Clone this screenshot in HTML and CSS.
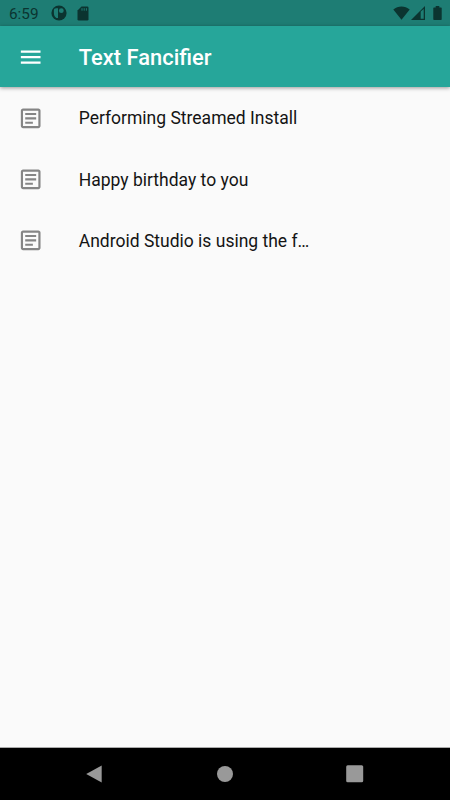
FILE: index.html
```html
<!DOCTYPE html>
<html lang="en">
<head>
<meta charset="utf-8">
<title>Text Fancifier</title>
<link rel="stylesheet" href="styles.css">
</head>
<body>
<svg width="0" height="0" class="defs">
  <symbol id="note" viewBox="0.400 -0.200 24 24">
    <path d="M19 5v14H5V5h14m0-2H5c-1.100 0-2 .9-2 2v14c0 1.100.9 2 2 2h14c1.100 0 2-.9 2-2V5c0-1.100-.9-2-2-2zm-5 14H7v-2h7v2zm3-4H7v-2h10v2zm0-4H7V7h10v2z"/>
  </symbol>
</svg>
<div class="screen">
  <header class="status">
    <span class="time">6:59</span>
    <svg class="app" viewBox="0 0 16 16"><circle cx="8" cy="8" r="7.600"/><path class="hole" d="M5.100 3.200H7V13H5.400C3.700 12 2.900 10 2.900 8V5.400c0-1.300.8-2.200 2.200-2.200z"/><circle class="hole" cx="10.300" cy="5.700" r="2.400"/></svg>
    <svg class="sd" viewBox="0 0 12 15"><path d="M4.500.5H10.200Q11.500.5 11.500 1.800V13.200Q11.500 14.500 10.200 14.500H1.800Q.5 14.500.5 13.200V4.500z"/><path class="slots" d="M5 2.200v2.500M7.200 2.200v2.500M9.400 2.200v2.500"/></svg>
    <span class="spacer"></span>
    <svg class="wifi" viewBox="0 0 17 14"><path d="M.3 3.600C5-.6 12-.6 16.700 3.600L8.500 13.700z"/></svg>
    <svg class="signal" viewBox="0 0 14 14"><path d="M0 14 14 0V14z"/><path class="hole" d="M9.700 5.400 12.700 3V12.700H9.700z"/></svg>
    <svg class="battery" viewBox="0 0 9 14"><path d="M2.700 0h3.600v1.400H8Q8.700 1.400 8.700 2.100V13.200Q8.700 14 8 14H1Q.3 14 .3 13.200V2.100Q.3 1.400 1 1.400H2.700z"/></svg>
  </header>
  <div class="toolbar">
    <svg class="icon" viewBox="0.400 0 24 24"><path d="M3 18h18v-2H3v2zm0-5h18v-2H3v2zm0-7v2h18V6H3z"/></svg>
    <h1>Text Fancifier</h1>
  </div>
  <main>
    <div class="row"><svg class="icon"><use href="#note"/></svg><span>Performing Streamed Install</span></div>
    <div class="row"><svg class="icon"><use href="#note"/></svg><span>Happy birthday to you</span></div>
    <div class="row"><svg class="icon"><use href="#note"/></svg><span>Android Studio is using the f…</span></div>
  </main>
  <nav>
    <svg viewBox="0 0 20 20"><path d="M17.700 1.500V18.500L2.200 10z"/></svg>
    <svg viewBox="0 0 20 20"><circle cx="10" cy="10" r="8"/></svg>
    <svg viewBox="0 0 20 20"><rect x="1.200" y="1.300" width="17" height="17" rx="1.500"/></svg>
  </nav>
</div>
</body>
</html>
```
FILE: styles.css
```css
* { box-sizing: border-box; }
body { margin: 0; font-family: Roboto, sans-serif; background: #fafafa; }
.defs { display: none; }
.screen { display: flex; flex-direction: column; width: 450px; height: 800px; overflow: hidden; }
.status {
  flex: none; display: flex; align-items: center; height: 26px;
  padding: 0 8px 0 9px; background: #1e7d74; color: #0b3430; fill: #0b3430;
}
.time { width: 41.500px; font-size: 15.300px; line-height: 26px; padding-top: 2px; }
.hole { fill: #1e7d74; }
.app { width: 16px; height: 16px; }
.sd { width: 12px; height: 15px; margin-left: 10px; }
.slots { fill: none; stroke: #1e7d74; stroke-width: 1; }
.spacer { flex: 1; }
.wifi { width: 17px; height: 14px; }
.signal { width: 14px; height: 14px; margin-left: 1px; }
.battery { width: 9px; height: 14px; margin-left: 8px; }
.toolbar {
  flex: none; display: flex; align-items: center; height: 61.250px; padding-left: 17.500px;
  background: #26a69a; color: #fff; fill: #fff;
  box-shadow: 0 1px 4px rgba(0, 0, 0, .4);
}
.icon { flex: none; width: 26.250px; height: 26.250px; }
h1 { margin: 0 0 0 35px; padding-top: 2px; font-size: 21.900px; font-weight: 500; line-height: 30px; }
main { flex: 1; }
.row {
  display: flex; align-items: center; height: 61.250px; padding-left: 17.500px;
  font-size: 17.500px; color: #141414; fill: #858585;
}
.row span { margin-left: 35px; padding-top: 1.200px; }
nav {
  flex: none; display: flex; align-items: center; justify-content: space-between;
  height: 53px; padding: 0 85px 0 84px; border-top: 1px solid #aaa; background: #000; fill: #999;
}
nav svg { width: 20px; height: 20px; }
```
